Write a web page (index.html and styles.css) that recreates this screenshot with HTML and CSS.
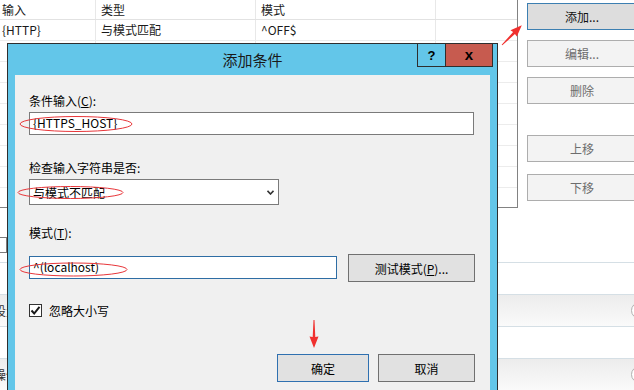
FILE: index.html
```html
<!DOCTYPE html>
<html lang="zh-CN">
<head>
  <meta charset="UTF-8">
  <title>添加条件</title>
  <link rel="stylesheet" href="styles.css">
</head>
<body>
  <div class="screen">
    <div class="top">
      <div class="grid">
        <div class="row head">
          <span class="cell c1">输入</span>
          <span class="cell c2">类型</span>
          <span class="cell c3">模式</span>
          <span class="cell c4"></span>
        </div>
        <div class="row">
          <span class="cell c1">{HTTP}</span>
          <span class="cell c2">与模式匹配</span>
          <span class="cell c3">^OFF$</span>
          <span class="cell c4"></span>
        </div>
        <div class="row"><span class="cell c1"></span><span class="cell c2"></span><span class="cell c3"></span><span class="cell c4"></span></div>
        <div class="row"><span class="cell c1"></span><span class="cell c2"></span><span class="cell c3"></span><span class="cell c4"></span></div>
        <div class="row"><span class="cell c1"></span><span class="cell c2"></span><span class="cell c3"></span><span class="cell c4"></span></div>
        <div class="row"><span class="cell c1"></span><span class="cell c2"></span><span class="cell c3"></span><span class="cell c4"></span></div>
        <div class="row"><span class="cell c1"></span><span class="cell c2"></span><span class="cell c3"></span><span class="cell c4"></span></div>
        <div class="row"><span class="cell c1"></span><span class="cell c2"></span><span class="cell c3"></span><span class="cell c4"></span></div>
        <div class="row"><span class="cell c1"></span><span class="cell c2"></span><span class="cell c3"></span><span class="cell c4"></span></div>
      </div>

      <div class="actions">
        <button class="btn primary">添加...</button>
        <button class="btn off gap-s">编辑...</button>
        <button class="btn off gap-s">删除</button>
        <button class="btn off gap-l">上移</button>
        <button class="btn off gap-m">下移</button>
      </div>
    </div>

    <div class="lower">
      <div class="lower-top"><span class="stub"></span></div>
      <div class="strip"></div>
      <div class="strip band"><span class="band-name">设置</span><span class="expand"></span></div>
      <div class="strip"></div>
      <div class="strip band"><span class="band-name">操作</span><span class="expand"></span></div>
    </div>

    <div class="dialog">
      <div class="titlebar">添加条件</div>
      <div class="controls">
        <span class="ctl help">?</span>
        <span class="ctl close">x</span>
      </div>

      <div class="client">
        <label class="label">条件输入(<u>C</u>):</label>
        <div class="field field-wide">{HTTPS_HOST}</div>

        <label class="label label-2">检查输入字符串是否:</label>
        <div class="select">
          <span>与模式不匹配</span>
          <svg width="7" height="5" viewBox="0 0 7 5"><polyline points="0.5,0.8 3.5,4 6.5,0.8" fill="none" stroke="#333" stroke-width="1.6"/></svg>
        </div>

        <label class="label label-3">模式(<u>T</u>):</label>
        <div class="pattern-row">
          <div class="field field-pattern">^(localhost)</div>
          <button class="dbtn test">测试模式(<u>P</u>)...</button>
        </div>

        <div class="check-row">
          <span class="checkbox">
            <svg width="11" height="11" viewBox="0 0 11 11"><polyline points="1.5,5.5 4.2,8.5 9.5,1.8" fill="none" stroke="#1a1a1a" stroke-width="2"/></svg>
          </span>
          <span>忽略大小写</span>
        </div>

        <div class="button-row">
          <button class="dbtn ok">确定</button>
          <button class="dbtn cancel">取消</button>
        </div>
      </div>
    </div>

    <svg class="marks" width="634" height="390" viewBox="0 0 634 390">
      <defs>
        <path id="arrow" d="M-0.5 0 L0.5 0 L1.3 -17 L4.5 -16.5 L0 -28 L-4.5 -16.5 L-1.3 -17 Z" fill="#f0302e"/>
      </defs>
      <ellipse cx="76" cy="124" rx="56" ry="7.5" fill="none" stroke="#e8363a" stroke-width="1"/>
      <ellipse cx="70.5" cy="192.5" rx="52.5" ry="6" fill="none" stroke="#e8363a" stroke-width="1"/>
      <ellipse cx="73.5" cy="269.5" rx="53.5" ry="6.5" fill="none" stroke="#e8363a" stroke-width="1"/>
      <use href="#arrow" transform="translate(502 45) rotate(45)"/>
      <use href="#arrow" transform="translate(314 320) rotate(180)"/>
    </svg>
  </div>
</body>
</html>
```

FILE: styles.css
```css
* {
  box-sizing: border-box;
}

body {
  margin: 0;
  background-color: #fff;
  color: #1a1a1a;
  font-family: "Noto Sans CJK SC", "Noto Sans", sans-serif;
  font-size: 12px;
  overflow: hidden;
}

.screen {
  position: relative;
  width: 634px;
  height: 390px;
  overflow: hidden;
}

/* background list view */

.top {
  display: flex;
  height: 208px;
}

.grid {
  flex: none;
  width: 518px;
  height: 208px;
  border-right: 1px solid #828282;
  border-bottom: 1px solid #828282;
  overflow: hidden;
}

.row {
  display: flex;
  height: 21px;
  border-bottom: 1px solid #ececec;
}

.row.head {
  height: 20px;
  border-bottom-color: #e2e2e2;
}

.cell {
  padding-left: 5px;
  line-height: 20px;
  white-space: nowrap;
  border-right: 1px solid #e8e8e8;
}

.head .cell {
  line-height: 19px;
}

.c1 {
  width: 96px;
  padding-left: 2px;
}

.c2 {
  width: 160px;
}

.c3 {
  width: 180px;
}

.c4 {
  flex: 1;
  border-right: none;
}

.actions {
  flex: 1;
  display: flex;
  flex-direction: column;
  align-items: flex-start;
  padding: 3px 0 0 9px;
}

.btn {
  flex: none;
  width: 110px;
  height: 27px;
  padding: 0;
  font: inherit;
  color: #6d6d6d;
  background-color: #f3f3f3;
  border: 1px solid #adadad;
}

.btn.primary {
  color: #111;
  background-color: #dddddd;
  border-color: #3c7fb1;
}

.gap-s {
  margin-top: 10px;
}

.gap-l {
  margin-top: 31px;
}

.gap-m {
  margin-top: 12px;
}

.lower-top {
  height: 54px;
  padding-top: 29px;
}

.stub {
  display: block;
  width: 7px;
  height: 16px;
  border: 1px solid #7a7a7a;
  border-left: none;
}

.strip {
  height: 32px;
  display: flex;
  align-items: center;
  justify-content: space-between;
  border-top: 1px solid #d5dfe5;
}

.band {
  background: linear-gradient(#ececec, #fafafa);
}

.band-name {
  margin-left: -6px;
  color: #333;
}

.expand {
  width: 17px;
  height: 17px;
  margin-right: -14px;
  border: 1px solid #b0b0b0;
  border-radius: 50%;
  background-color: #fff;
}

/* dialog window */

.dialog {
  position: absolute;
  left: 7px;
  top: 43px;
  width: 491px;
  height: 360px;
  display: flex;
  flex-direction: column;
  padding: 0 7px;
  background-color: #63c6e9;
  border: 1px solid #2e2e2e;
}

.titlebar {
  flex: none;
  height: 31px;
  display: flex;
  align-items: center;
  justify-content: center;
  font-size: 15px;
  color: #1a1a1a;
}

.controls {
  position: absolute;
  top: 0;
  right: 4px;
  display: flex;
  height: 23px;
  border: 1px solid #2e2e2e;
  border-top: none;
}

.ctl {
  display: flex;
  align-items: center;
  justify-content: center;
  font-family: "Liberation Sans", sans-serif;
  font-weight: bold;
  color: #000;
}

.help {
  width: 28px;
  font-size: 13px;
  border-right: 1px solid #2e2e2e;
}

.close {
  width: 46px;
  font-size: 15px;
  padding-bottom: 2px;
  background-color: #c75b4f;
}

.client {
  flex: 1;
  padding: 18px 15px 0 14px;
  background-color: #f0f0f0;
  color: #000;
}

.label {
  display: block;
  line-height: 16px;
}

.label-2 {
  margin-top: 25px;
}

.label-3 {
  margin-top: 20px;
}

.field {
  height: 23px;
  margin-top: 3px;
  padding-left: 3px;
  line-height: 20px;
  background-color: #fff;
  border: 1px solid #7a7a7a;
}

.field-wide {
  width: 445px;
}

.select {
  width: 250px;
  height: 26px;
  margin-top: 3px;
  display: flex;
  align-items: center;
  justify-content: space-between;
  padding: 0 4px 0 3px;
  background-color: #fff;
  border: 1px solid #7a7a7a;
}

.pattern-row {
  display: flex;
  align-items: flex-start;
  gap: 11px;
  margin-top: 13px;
}

.field-pattern {
  width: 308px;
  margin-top: 2px;
  border-color: #2e6da4;
}

.dbtn {
  height: 28px;
  padding: 0;
  font: inherit;
  color: #000;
  background-color: #e1e1e1;
  border: 1px solid #707070;
}

.test {
  width: 127px;
}

.check-row {
  display: flex;
  align-items: center;
  gap: 7px;
  height: 16px;
  margin-top: 20px;
}

.checkbox {
  width: 13px;
  height: 13px;
  display: flex;
  align-items: center;
  justify-content: center;
  background-color: #fff;
  border: 1px solid #333;
}

.button-row {
  display: flex;
  justify-content: flex-end;
  gap: 9px;
  margin-top: 36px;
}

.ok {
  width: 92px;
  border-color: #2f70b0;
}

.cancel {
  width: 97px;
}

.marks {
  position: absolute;
  left: 0;
  top: 0;
  pointer-events: none;
}
```
